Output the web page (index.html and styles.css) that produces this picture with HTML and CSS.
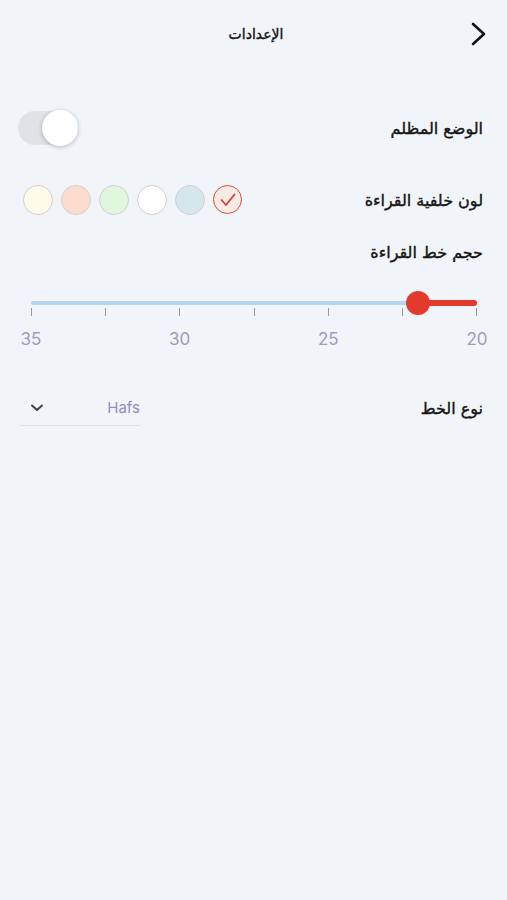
FILE: index.html
```html
<!DOCTYPE html>
<html lang="ar" dir="rtl">
<head>
    <meta charset="UTF-8">
    <meta name="viewport" content="width=device-width, initial-scale=1.0">
    <title>الإعدادات</title>
    <link rel="stylesheet" href="styles.css">
</head>
<body>
    <div class="header">
        <button class="back" aria-label="رجوع">
            <svg width="18" height="24" viewBox="0 0 18 24">
                <path d="M3 2 L14 12 L3 22" fill="none" stroke="#111" stroke-width="2.6" stroke-linecap="round" stroke-linejoin="round"/>
            </svg>
        </button>
        <h1 class="title">الإعدادات</h1>
        <span></span>
    </div>

    <div class="settings">
        <!-- Dark mode -->
        <div class="row row-dark">
            <span class="label">الوضع المظلم</span>
            <div class="toggle"><span class="knob"></span></div>
        </div>

        <!-- Reading background -->
        <div class="row row-colors">
            <span class="label">لون خلفية القراءة</span>
            <div class="swatches">
                <span class="swatch selected">
                    <svg width="16" height="14" viewBox="0 0 16 14">
                        <path d="M1.5 7 L6 12 L14.5 1.5" fill="none" stroke="#e23b2e" stroke-width="1.8" stroke-linecap="round" stroke-linejoin="round"/>
                    </svg>
                </span>
                <span class="swatch sw-blue"></span>
                <span class="swatch sw-white"></span>
                <span class="swatch sw-green"></span>
                <span class="swatch sw-pink"></span>
                <span class="swatch sw-cream"></span>
            </div>
        </div>

        <!-- Font size -->
        <div class="row row-size">
            <span class="label">حجم خط القراءة</span>
        </div>
        <div class="slider">
            <div class="track">
                <div class="fill" style="width: 13.3%"></div>
                <span class="thumb" style="right: 13.3%"></span>
            </div>
            <div class="ticks">
                <span></span><span></span><span></span><span></span><span></span><span></span><span></span>
            </div>
            <div class="scale">
                <span>20</span><span>25</span><span>30</span><span>35</span>
            </div>
        </div>

        <!-- Font type -->
        <div class="row row-font">
            <span class="label">نوع الخط</span>
            <div class="select">
                <span class="select-value">Hafs</span>
                <svg width="14" height="10" viewBox="0 0 14 10">
                    <path d="M2 2.5 L7 7 L12 2.5" fill="none" stroke="#444" stroke-width="2" stroke-linecap="round" stroke-linejoin="round"/>
                </svg>
            </div>
        </div>
    </div>
</body>
</html>
```

FILE: styles.css
```css
body {
    margin: 0;
    background: #f1f5f9;
    font-family: "DejaVu Sans", "Noto Sans", sans-serif;
    color: #151515;
}
.header {
    display: grid;
    grid-template-columns: 1fr auto 1fr;
    align-items: center;
    height: 68px;
    padding: 0 19px 0 24px;
}
.back {
    justify-self: start;
    display: flex;
    padding: 0;
    background: none;
    border: none;
    cursor: pointer;
}
.title {
    margin: 0;
    font-size: 14px;
    font-weight: normal;
    -webkit-text-stroke: 0.4px currentColor;
}
.settings {
    padding: 32px 24px 0 18px;
}
.row {
    display: flex;
    align-items: center;
    justify-content: space-between;
}
.label {
    font-size: 16px;
    -webkit-text-stroke: 0.4px currentColor;
}
.row-dark {
    height: 56px;
}
.toggle {
    position: relative;
    width: 58px;
    height: 34px;
    border-radius: 17px;
    background: #e1e2e5;
}
.knob {
    position: absolute;
    top: -1px;
    left: 24px;
    width: 36px;
    height: 36px;
    border-radius: 50%;
    background: #fff;
    box-shadow: 0 1px 4px rgba(0, 0, 0, 0.25);
}
.row-colors {
    height: 40px;
    margin-top: 24px;
}
.swatches {
    display: flex;
    gap: 8px;
    margin-left: 5px;
}
.swatch {
    display: flex;
    align-items: center;
    justify-content: center;
    width: 28px;
    height: 28px;
    border-radius: 50%;
    border: 1px solid #d0d0d0;
}
.swatch.selected {
    border: 1.5px solid #e0483a;
    width: 27px;
    height: 27px;
    background: #f7ebe5;
}
.sw-blue { background: #d6e6ee; }
.sw-white { background: #ffffff; }
.sw-green { background: #e0f7dd; }
.sw-pink { background: #fddcd0; }
.sw-cream { background: #fefbe8; }
.row-size {
    height: 32px;
    margin-top: 16px;
}
.slider {
    margin: 0 6px 0 13px;
    padding-top: 33px;
}
.track {
    position: relative;
    height: 4px;
    border-radius: 2px;
    background: #b9d4ef;
}
.fill {
    position: absolute;
    top: -1px;
    right: 0;
    height: 6px;
    border-radius: 3px;
    background: #e23b2e;
}
.thumb {
    position: absolute;
    top: -10px;
    width: 24px;
    height: 24px;
    margin-right: -12px;
    border-radius: 50%;
    background: #e23b2e;
}
.ticks {
    display: flex;
    justify-content: space-between;
    height: 8px;
    margin-top: 3px;
}
.ticks span {
    width: 1px;
    background: #9a9a9a;
}
.scale {
    display: flex;
    justify-content: space-between;
    margin: 13px -20px 0;
    font-family: Inter, "Noto Sans", sans-serif;
    font-size: 17px;
    color: #9c9dbd;
}
.scale span {
    width: 40px;
    text-align: center;
}
.row-font {
    height: 40px;
    margin-top: 39px;
}
.select {
    display: flex;
    align-items: center;
    justify-content: space-between;
    width: 120px;
    height: 36px;
    margin-left: 2px;
    padding-left: 10px;
    box-sizing: border-box;
    border-bottom: 1px solid #dfe3e8;
}
.select-value {
    font-family: Inter, "Noto Sans", sans-serif;
    font-size: 15px;
    color: #8f8fbc;
}
```
